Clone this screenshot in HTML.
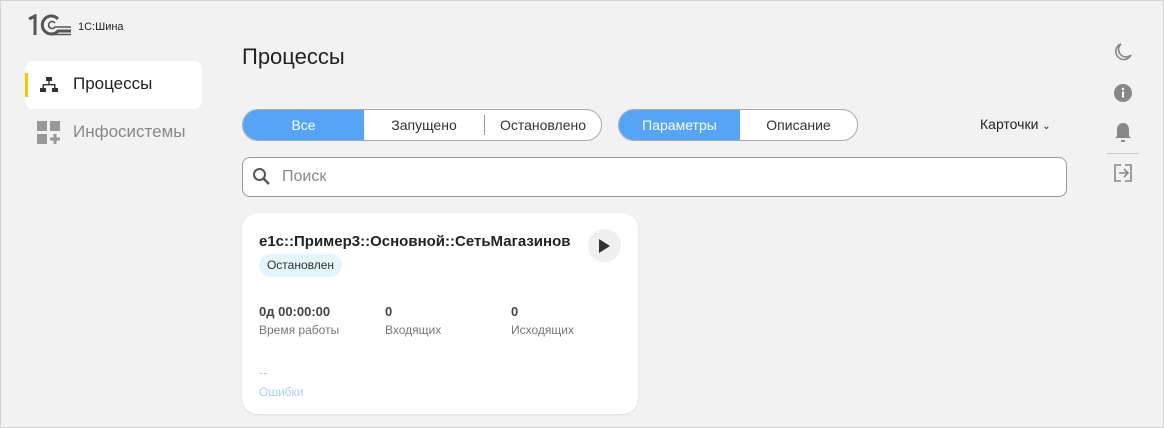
<!DOCTYPE html>
<html><head><meta charset="utf-8"><style>
*{box-sizing:border-box;margin:0;padding:0}
body{width:1164px;height:428px;background:#f2f2f2;font-family:"Liberation Sans",Roboto,sans-serif;position:relative;overflow:hidden}
.a{position:absolute}
.seg{position:absolute;top:109px;height:32px;border:1px solid #aaa;border-radius:16px;background:#fff;display:flex;overflow:hidden;font-size:14px;color:#333}
.seg div{display:flex;align-items:center;justify-content:center;height:100%}
.seg .on{background:#55a4f7;color:#fff}
.lab{font-size:12px;color:#777}
.val{font-size:13px;font-weight:bold;color:#444}
</style></head><body>
<div class="a" style="left:0;top:0;width:1164px;height:428px;border:1px solid #d4d4d4"></div>
<svg class="a" style="left:28px;top:14px" width="44" height="22" viewBox="0 0 44 22">
<g fill="none" stroke="#555" stroke-width="3">
<path d="M1 5 L7 2 V21"/><path d="M30 5 A9 9 0 1 0 30 17 H43"/></g>
<g fill="none" stroke="#555" stroke-width="1.6"><path d="M27 9 A3.5 3.5 0 1 0 27 13 H43"/><path d="M24 20.5 H43"/></g></svg>
<div class="a" style="left:78px;top:21px;font-size:11px;color:#222">1С:Шина</div>

<div class="a" style="left:25px;top:61px;width:177px;height:48px;background:#fff;border-radius:8px"></div>
<div class="a" style="left:25px;top:73px;width:3px;height:24px;background:#f6c800"></div>
<svg class="a" style="left:40px;top:77px" width="18" height="16" viewBox="0 0 18 16"><g fill="#333"><rect x="6" y="0" width="6" height="4"/><rect x="8.3" y="4" width="1.4" height="3"/><rect x="2.5" y="7" width="13" height="1.4"/><rect x="2.5" y="7" width="1.4" height="4"/><rect x="14.1" y="7" width="1.4" height="4"/><rect x="0" y="11" width="6" height="4"/><rect x="12" y="11" width="6" height="4"/></g></svg>
<div class="a" style="left:73px;top:74px;font-size:17px;color:#222">Процессы</div>
<svg class="a" style="left:37px;top:121px" width="24" height="24" viewBox="0 0 24 24"><g fill="#999"><rect x="0" y="0" width="10" height="10"/><rect x="13" y="0" width="10" height="10"/><rect x="0" y="13" width="10" height="10"/><rect x="16.5" y="13" width="3" height="10"/><rect x="13" y="16.5" width="10" height="3"/></g></svg>
<div class="a" style="left:73px;top:122px;font-size:17px;color:#888">Инфосистемы</div>

<div class="a" style="left:242px;top:44px;font-size:22px;color:#222">Процессы</div>

<div class="seg" style="left:242px;width:360px"><div class="on" style="width:121px">Все</div><div style="width:120px">Запущено</div><div style="width:1px;height:20px;margin-top:5px;background:#999"></div><div style="flex:1">Остановлено</div></div>
<div class="seg" style="left:618px;width:240px"><div class="on" style="width:121px">Параметры</div><div style="flex:1">Описание</div></div>
<div class="a" style="left:980px;top:116px;font-size:14px;color:#222">Карточки <span style="font-size:10px">⌄</span></div>

<div class="a" style="left:242px;top:157px;width:825px;height:40px;border:1px solid #999;border-radius:8px;background:#fff"></div>
<svg class="a" style="left:252px;top:167px" width="20" height="20" viewBox="0 0 20 20"><circle cx="7.5" cy="7.5" r="5.5" fill="none" stroke="#555" stroke-width="2"/><path d="M11.5 11.5 L17 17" stroke="#555" stroke-width="2.4"/></svg>
<div class="a" style="left:282px;top:168px;font-size:16px;color:#888">Поиск</div>

<div class="a" style="left:242px;top:213px;width:396px;height:201px;background:#fff;border-radius:16px;box-shadow:0 1px 3px rgba(0,0,0,.08)"></div>
<div class="a" style="left:259px;top:233px;font-size:15px;font-weight:bold;color:#222">e1c::Пример3::Основной::СетьМагазинов</div>
<div class="a" style="left:588px;top:229px;width:33px;height:33px;border-radius:50%;background:#f0f0f0"></div>
<svg class="a" style="left:598px;top:238px" width="14" height="16" viewBox="0 0 14 16"><path d="M1 1 L12 8 L1 15Z" fill="#333"/></svg>
<div class="a" style="left:259px;top:254px;width:83px;height:23px;background:#e3f5fd;border-radius:12px;font-size:12px;color:#333;line-height:23px;text-align:center">Остановлен</div>
<div class="a val" style="left:259px;top:304px">0д 00:00:00</div>
<div class="a lab" style="left:259px;top:323px">Время работы</div>
<div class="a val" style="left:385px;top:304px">0</div>
<div class="a lab" style="left:385px;top:323px">Входящих</div>
<div class="a val" style="left:511px;top:304px">0</div>
<div class="a lab" style="left:511px;top:323px">Исходящих</div>
<div class="a" style="left:259px;top:365px;font-size:13px;color:#a8cff8">--</div>
<div class="a" style="left:259px;top:385px;font-size:12px;color:#a8cff8">Ошибки</div>

<svg class="a" style="left:1113px;top:42px" width="20" height="20" viewBox="0 0 20 20"><path d="M8 2 A8 8 0 1 0 18 13 A7 7 0 0 1 8 2Z" fill="none" stroke="#888" stroke-width="1.6"/></svg>
<svg class="a" style="left:1113px;top:83px" width="20" height="20" viewBox="0 0 20 20"><circle cx="10" cy="10" r="9" fill="#888"/><rect x="9" y="8.5" width="2" height="6" fill="#fff"/><circle cx="10" cy="6" r="1.2" fill="#fff"/></svg>
<svg class="a" style="left:1113px;top:122px" width="20" height="22" viewBox="0 0 20 22"><path d="M10 1 C5 1 4 5 4 9 V14 L2 16 H18 L16 14 V9 C16 5 15 1 10 1Z" fill="#888"/><rect x="8" y="18" width="4" height="2" fill="#888"/></svg>
<div class="a" style="left:1107px;top:153px;width:32px;height:1px;background:#ccc"></div>
<svg class="a" style="left:1113px;top:163px" width="20" height="20" viewBox="0 0 20 20"><g fill="none" stroke="#888" stroke-width="1.6"><path d="M8 2 H2 V18 H8 M12 2 H18 V18 H12"/><path d="M6 10 H15 M11 6 L15 10 L11 14"/></g></svg>
</body></html>
